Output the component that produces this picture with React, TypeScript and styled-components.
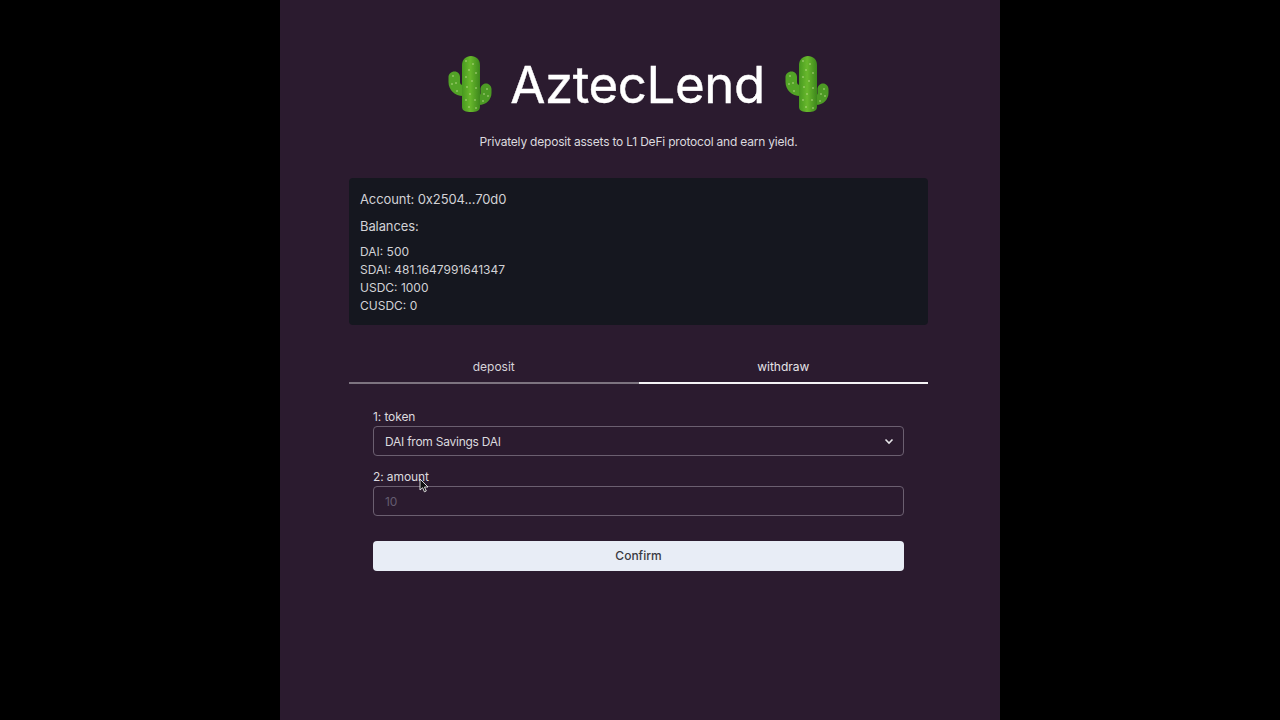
import React from "react";
import styled, { createGlobalStyle } from "styled-components";

const GlobalStyle = createGlobalStyle`
  html, body {
    margin: 0;
    padding: 0;
    height: 100%;
    background: #000;
    font-family: Inter, "Liberation Sans", sans-serif;
  }
`;
const Page = styled.div`
  width: 720px;
  height: 720px;
  margin: 0 auto;
  background: #2b1b2f;
  display: flex;
  flex-direction: column;
  align-items: center;
  overflow: hidden;
`;
const Content = styled.div`
  width: 579px;
  margin-left: -3px;
  display: flex;
  flex-direction: column;
`;
const Title = styled.h1`
  margin: 50px 0 0;
  height: 70px;
  padding-right: 2px;
  display: flex;
  align-items: center;
  justify-content: center;
  gap: 17px;
  font-size: 51px;
  line-height: 68px;
  font-weight: 400;
  letter-spacing: -0.4px;
  -webkit-text-stroke: 0.4px #fff;
  color: #fff;
`;
const Subtitle = styled.p`
  margin: 13px 0 0;
  height: 18px;
  line-height: 18px;
  font-size: 12px;
  letter-spacing: -0.2px;
  text-align: center;
  color: #dcdadf;
`;
const Panel = styled.section`
  margin-top: 27px;
  height: 147px;
  box-sizing: border-box;
  padding: 11px 11px 0;
  background: #15171f;
  border-radius: 4px;
  color: #d2d2d6;
`;
const PanelLine = styled.div`
  height: 20px;
  line-height: 20px;
  font-size: 13px;
  letter-spacing: -0.1px;
  margin-bottom: 7px;
`;
const BalanceList = styled.div`
  margin-top: 5px;
  font-size: 12px;
  line-height: 18px;
`;
const Tabs = styled.div`
  margin-top: 33px;
  display: grid;
  grid-template-columns: 1fr 1fr;
`;
const Tab = styled.div<{ $active?: boolean }>`
  height: 24px;
  line-height: 18px;
  font-size: 12px;
  text-align: center;
  color: ${(p) => (p.$active ? "#e6e4e8" : "#d6d3d9")};
  border-bottom: 2px solid ${(p) => (p.$active ? "#f4f3f5" : "#7d7480")};
`;
const Form = styled.form`
  margin-top: 24px;
  padding: 0 24px;
  display: flex;
  flex-direction: column;
`;
const Label = styled.label`
  position: relative;
  display: block;
  height: 18px;
  line-height: 18px;
  font-size: 12px;
  letter-spacing: -0.1px;
  color: #dcdadf;
`;
const Field = styled.div`
  height: 30px;
  box-sizing: border-box;
  padding: 0 11px;
  display: flex;
  align-items: center;
  justify-content: space-between;
  border: 1px solid #6b5f70;
  border-radius: 4px;
  font-size: 12px;
  letter-spacing: -0.25px;
  color: #dcdadf;
  margin-bottom: 12px;
`;
const Placeholder = styled.span`
  color: #645c70;
`;
const Chevron = styled.svg`
  width: 12px;
  height: 12px;
  margin-right: -3px;
`;
const Cursor = styled.svg`
  position: absolute;
  left: 46px;
  top: 10px;
  width: 10px;
  height: 15px;
`;
const Confirm = styled.button`
  margin-top: 13px;
  height: 30px;
  padding: 0 0 2px;
  border: none;
  border-radius: 4px;
  background: #e8edf6;
  color: #3a3a42;
  font-family: inherit;
  font-size: 12px;
  font-weight: 500;
`;
const CactusIcon = styled.svg`
  width: 48px;
  height: 58px;
  flex: none;
`;

const speckles = [
  [21, 5], [28, 8], [24, 14], [31, 17], [21, 21], [27, 25], [22, 31], [31, 32],
  [25, 38], [21, 44], [30, 44], [24, 51], [31, 52], [8, 20], [11, 27], [7, 28],
  [12, 35], [42, 33], [39, 38], [43, 40], [38, 45],
];

const Cactus = () => (
  <CactusIcon viewBox="0 0 48 58">
    <defs>
      <linearGradient id="cactusSkin" x1="0" y1="0" x2="1" y2="0">
        <stop offset="0" stopColor="#47991f" />
        <stop offset="0.45" stopColor="#68b82c" />
        <stop offset="1" stopColor="#3d871c" />
      </linearGradient>
    </defs>
    <path
      d="M3.500 21C3.500 18 6 15.500 9.500 15.500C13 15.500 15 18 15 21V26C15 28 16 29 18 29V40C10 40 3.500 34 3.500 26Z"
      fill="#52a326"
    />
    <path
      d="M46.500 33C46.500 30 44 27.500 41 27.500C38 27.500 35.500 30 35.500 33V37C35.500 38.500 35 39 34 39V49C41 49 46.500 43.500 46.500 37Z"
      fill="#4c9a24"
    />
    <path
      d="M17 9C17 3.500 21 0 26 0C31 0 35 3.500 35 9V51C35 55 31 56 26 56C21 56 17 55 17 51Z"
      fill="url(#cactusSkin)"
    />
    <g fill="#cfe8a0">
      {speckles.map(([x, y]) => (
        <circle key={`${x}-${y}`} cx={x} cy={y} r="0.7" />
      ))}
    </g>
  </CactusIcon>
);

export default function App() {
  return (
    <>
      <GlobalStyle />
      <Page>
        <Content>
          <Title>
            <Cactus />
            AztecLend
            <Cactus />
          </Title>
          <Subtitle>Privately deposit assets to L1 DeFi protocol and earn yield.</Subtitle>
          <Panel>
            <PanelLine>Account: 0x2504...70d0</PanelLine>
            <PanelLine>Balances:</PanelLine>
            <BalanceList>
              <div>DAI: 500</div>
              <div>SDAI: 481.1647991641347</div>
              <div>USDC: 1000</div>
              <div>CUSDC: 0</div>
            </BalanceList>
          </Panel>
          <Tabs>
            <Tab>deposit</Tab>
            <Tab $active>withdraw</Tab>
          </Tabs>
          <Form>
            <Label>1: token</Label>
            <Field>
              DAI from Savings DAI
              <Chevron viewBox="0 0 12 12" fill="none" stroke="#e6e4e8" strokeWidth="1.6">
                <path d="M2.500 4.500L6 8L9.500 4.500" />
              </Chevron>
            </Field>
            <Label>
              2: amount
              <Cursor viewBox="0 0 10 15">
                <path d="M1 1V12L3.600 9.700L5.400 13.800L7.300 13L5.500 9H9Z" fill="#111" stroke="#eee" strokeWidth="0.9" />
              </Cursor>
            </Label>
            <Field>
              <Placeholder>10</Placeholder>
            </Field>
            <Confirm type="button">Confirm</Confirm>
          </Form>
        </Content>
      </Page>
    </>
  );
}
